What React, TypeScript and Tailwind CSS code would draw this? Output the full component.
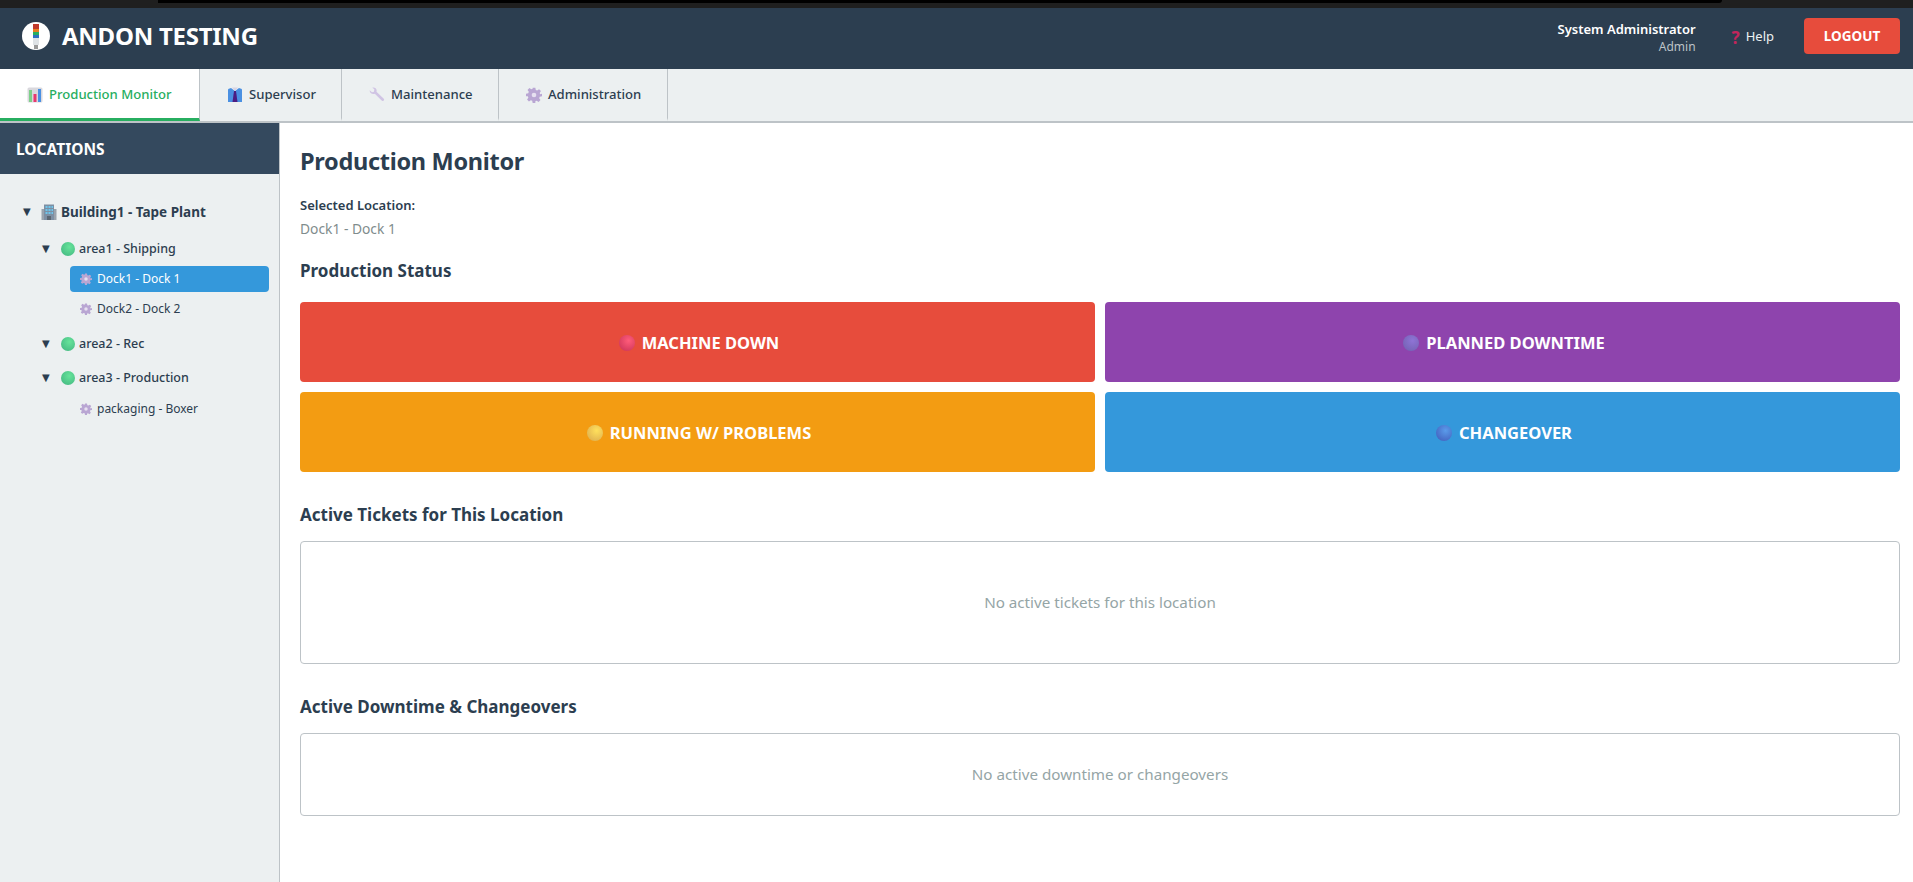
const Gear = ({ className = '' }: { className?: string }) => (
    <svg viewBox="0 0 24 24" className={className}>
        <path fill="#b9a6d3" d="M10 1h4l.7 3.4 2 .8L19.6 3.300l2.800 2.800-1.900 2.900.8 2L24 10v4l-3.400.7-.8 2 1.900 2.900-2.800 2.800-2.900-1.900-2 .8L14 24h-4l-.7-3.400-2-.8-2.900 1.900-2.800-2.800 1.900-2.900-.8-2L0 14v-4l3.400-.7.8-2-1.900-2.900 2.800-2.800 2.900 1.900 2-.8z" />
        <circle cx="12" cy="12" r="3.500" fill="#e6e0f0" />
    </svg>
)

const Wrench = () => (
    <svg viewBox="0 0 24 24" className="w-4 h-4 shrink-0">
        <path fill="#d0c4e4" d="M1 5l3.500 3 3-1L8 3.500 5 1c3-1 6.500 1 6.500 4.500 0 .7-.1 1.200-.3 1.700l11 10.300c1.700 1.700-.8 4.700-2.800 3L8.700 10.300C5 11.500 .5 9 1 5z" />
    </svg>
)

const Chart = () => (
    <svg viewBox="0 0 16 16" className="w-4 h-4 shrink-0">
        <rect x="0.500" y="0.500" width="15" height="15" rx="1.500" fill="#d9d8dd" />
        <rect x="2" y="3" width="3" height="12" fill="#7ed08a" />
        <rect x="6.500" y="7" width="3" height="8" fill="#e8386f" />
        <rect x="11" y="2" width="3" height="13" fill="#4a90e2" />
    </svg>
)

const Suit = () => (
    <svg viewBox="0 0 16 16" className="w-4 h-4 shrink-0">
        <path fill="#4a90e2" d="M1 3c0-1 1-1.500 3-2l4 3 4-3c2 .5 3 1 3 2v12H1z" />
        <path fill="#d8d4e4" d="M5 .500h6L8 4z" />
        <path fill="#4b1d82" d="M7 4h2l1.500 11h-5z" />
    </svg>
)

const Building = () => (
    <svg viewBox="0 0 16 16" className="w-4 h-4 shrink-0">
        <rect x="0.500" y="5" width="15" height="11" fill="#9aa3ad" />
        <rect x="3" y="0.500" width="10" height="15.500" fill="#7d8fa3" />
        <path fill="#6fc6ec" d="M4.500 2h2v2h-2zM7.500 2h2v2h-2zM10.500 2h1.500v2h-1.500zM4.500 5h2v2h-2zM7.500 5h2v2h-2zM10.500 5h1.500v2h-1.500zM4.500 8h2v2h-2zM7.500 8h2v2h-2zM10.500 8h1.500v2h-1.500z" />
        <rect x="6" y="12" width="4" height="4" fill="#5b6773" />
    </svg>
)

const Logo = () => (
    <div className="w-7 h-7 rounded-full bg-white flex items-center justify-center shrink-0">
        <svg viewBox="0 0 6 25" className="w-[6px] h-[25px]">
            <rect width="6" height="5" fill="#c0392b" />
            <rect y="5" width="6" height="3" fill="#e67e22" />
            <rect y="8" width="6" height="3" fill="#27ae60" />
            <rect y="11" width="6" height="3" fill="#2f6fc0" />
            <rect y="14" width="6" height="7" fill="#dfe3e6" />
            <rect x="1" y="21" width="4" height="4" fill="#9a9a9a" />
        </svg>
    </div>
)

const Ball = ({ className }: { className: string }) => <span className={`inline-block rounded-full shrink-0 ${className}`} />

const Arrow = () => <span className="w-[10px] text-[10px] leading-none text-[#2c3e50] font-['DejaVu_Sans',sans-serif]">▼</span>

const GreenBall = () => <Ball className="w-[14px] h-[14px] bg-[radial-gradient(circle_at_60%_35%,#66e39a,#3fb37f)]" />

const TABS = [
    { label: 'Production Monitor', icon: <Chart />, width: 'w-[200px]', active: true },
    { label: 'Supervisor', icon: <Suit />, width: 'w-[142px]' },
    { label: 'Maintenance', icon: <Wrench />, width: 'w-[157px]' },
    { label: 'Administration', icon: <Gear className="w-4 h-4 shrink-0" />, width: 'w-[169px]' },
]

const STATUS = [
    { label: 'MACHINE DOWN', bg: 'bg-[#e74c3c]', ball: 'bg-[radial-gradient(circle_at_60%_35%,#ff5c7a,#c72f55)]' },
    { label: 'PLANNED DOWNTIME', bg: 'bg-[#8e44ad]', ball: 'bg-[radial-gradient(circle_at_60%_35%,#8f74d6,#6f5fae)]' },
    { label: 'RUNNING W/ PROBLEMS', bg: 'bg-[#f39c12]', ball: 'bg-[radial-gradient(circle_at_60%_35%,#ffe05c,#d9a84e)]' },
    { label: 'CHANGEOVER', bg: 'bg-[#3498db]', ball: 'bg-[radial-gradient(circle_at_60%_35%,#5a9bea,#3f58b8)]' },
]

export default function App() {
    return (
        <div className="h-[882px] flex flex-col overflow-hidden bg-white text-[#2c3e50] font-['Noto_Sans',sans-serif]">
            <div className="h-2 bg-[#1f1f1f] pl-[158px] pr-[191px]">
                <div className="h-[3px] bg-black rounded-br-md" />
            </div>

            <header className="h-[61px] bg-[#2c3e50] flex items-center justify-between pl-[22px] pr-[13px] pb-[5px] text-white">
                <div className="flex items-center gap-3">
                    <Logo />
                    <h1 className="text-[24px] font-bold tracking-[-0.25px]">ANDON TESTING</h1>
                </div>
                <div className="flex items-center">
                    <div className="text-right mt-[2px]">
                        <div className="text-[13px] leading-[18px] font-semibold">System Administrator</div>
                        <div className="text-[12px] leading-[17px] text-[#bdc3c7]">Admin</div>
                    </div>
                    <div className="flex items-center gap-[6px] ml-9 mr-[30px] text-[13px] text-[#ecf0f1] mt-[2px]">
                        <span className="text-[#c2255c] font-bold text-[17px] leading-none">?</span>
                        Help
                    </div>
                    <button className="w-24 h-9 bg-[#e74c3c] rounded text-[13.500px] font-bold text-white">LOGOUT</button>
                </div>
            </header>

            <nav className="h-[54px] flex bg-[#ecf0f1] border-b-2 border-[#bdc3c7]">
                {TABS.map((t) => (
                    <div
                        key={t.label}
                        className={`flex items-center gap-[6px] pl-[27px] pt-[3px] border-r border-r-[#bdc3c7] border-b-[3px] text-[13.100px] font-medium ${t.width} ${t.active ? 'bg-white text-[#27ae60] border-b-[#27ae60]' : 'border-b-transparent'}`}
                    >
                        {t.icon}
                        {t.label}
                    </div>
                ))}
            </nav>

            <div className="flex-1 flex min-h-0">
                <aside className="w-[280px] bg-[#ecf0f1] border-r border-[#bdc3c7]">
                    <div className="h-[51px] bg-[#34495e] flex items-center px-4 pt-[3px] text-white text-[15.500px] font-bold">LOCATIONS</div>
                    <div className="pt-7 pl-[21px] pr-[10px] text-[13.500px]">
                        <div className="flex items-center gap-2 h-5 ml-[2px] font-bold">
                            <Arrow />
                            <Building />
                            <span className="-ml-1">Building1 - Tape Plant</span>
                        </div>

                        <div className="flex items-center gap-[9px] h-5 mt-[17px] ml-[21px] text-[12.500px] font-medium">
                            <Arrow />
                            <GreenBall />
                            <span className="-ml-[5px]">area1 - Shipping</span>
                        </div>
                        <div className="flex items-center gap-[5px] h-[26px] mt-[7px] ml-[49px] pl-[10px] rounded bg-[#3498db] text-white text-[12px]">
                            <Gear className="w-3 h-3 shrink-0" />
                            Dock1 - Dock 1
                        </div>
                        <div className="flex items-center gap-[5px] h-[26px] mt-1 ml-[49px] pl-[10px] text-[12px]">
                            <Gear className="w-3 h-3 shrink-0" />
                            Dock2 - Dock 2
                        </div>

                        <div className="flex items-center gap-[9px] h-5 mt-[12px] ml-[21px] text-[12.500px] font-medium">
                            <Arrow />
                            <GreenBall />
                            <span className="-ml-[5px]">area2 - Rec</span>
                        </div>
                        <div className="flex items-center gap-[9px] h-5 mt-[14px] ml-[21px] text-[12.500px] font-medium">
                            <Arrow />
                            <GreenBall />
                            <span className="-ml-[5px]">area3 - Production</span>
                        </div>
                        <div className="flex items-center gap-[5px] h-[26px] mt-[8px] ml-[49px] pl-[10px] text-[12px]">
                            <Gear className="w-3 h-3 shrink-0" />
                            packaging - Boxer
                        </div>
                    </div>
                </aside>

                <main className="flex-1 pt-5 pl-5 pr-[13px]">
                    <h2 className="text-[23.500px] leading-9 font-bold tracking-[-0.3px]">Production Monitor</h2>
                    <div className="mt-[14px] text-[13px] leading-6 font-semibold">Selected Location:</div>
                    <div className="text-[13.800px] leading-6 text-[#7f8c8d]">Dock1 - Dock 1</div>
                    <h3 className="mt-[18px] text-[17px] leading-6 font-bold">Production Status</h3>

                    <div className="mt-[19px] grid grid-cols-2 gap-[10px]">
                        {STATUS.map((s) => (
                            <button key={s.label} className={`h-20 rounded flex items-center justify-center gap-[7px] pl-[3px] pt-[2px] text-white text-[16.500px] font-bold ${s.bg}`}>
                                <Ball className={`w-4 h-4 ${s.ball}`} />
                                {s.label}
                            </button>
                        ))}
                    </div>

                    <h3 className="mt-[31px] text-[17px] leading-6 font-bold">Active Tickets for This Location</h3>
                    <div className="mt-[14px] h-[123px] border border-[#bdc3c7] rounded flex items-center justify-center text-[15.200px] text-[#95a5a6]">
                        No active tickets for this location
                    </div>

                    <h3 className="mt-[31px] text-[17px] leading-6 font-bold">Active Downtime &amp; Changeovers</h3>
                    <div className="mt-[14px] h-[83px] border border-[#bdc3c7] rounded flex items-center justify-center text-[15.200px] text-[#95a5a6]">
                        No active downtime or changeovers
                    </div>
                </main>
            </div>
        </div>
    )
}
